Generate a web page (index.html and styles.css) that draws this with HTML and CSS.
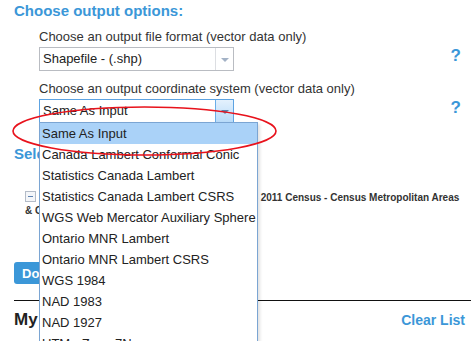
FILE: index.html
```html
<!DOCTYPE html>
<html lang="en">
<head>
    <meta charset="UTF-8">
    <title>Output options</title>
    <link rel="stylesheet" href="styles.css">
</head>
<body>

<div class="page">
    <h2 class="heading">Choose output options:</h2>

    <div class="field">
        <label class="field-label">Choose an output file format (vector data only)</label>
        <div class="field-row">
            <div class="select">
                <span class="select-value">Shapefile - (.shp)</span>
                <span class="select-arrow"></span>
            </div>
            <span class="help">?</span>
        </div>
    </div>

    <div class="field">
        <label class="field-label">Choose an output coordinate system (vector data only)</label>
        <div class="field-row">
            <div class="select open">
                <span class="select-value">Same As Input</span>
                <span class="select-arrow"></span>
                <ul class="options">
                    <li class="selected">Same As Input</li>
                    <li>Canada Lambert Conformal Conic</li>
                    <li>Statistics Canada Lambert</li>
                    <li>Statistics Canada Lambert CSRS</li>
                    <li>WGS Web Mercator Auxiliary Sphere</li>
                    <li>Ontario MNR Lambert</li>
                    <li>Ontario MNR Lambert CSRS</li>
                    <li>WGS 1984</li>
                    <li>NAD 1983</li>
                    <li>NAD 1927</li>
                    <li>UTM - Zone 7N</li>
                </ul>
            </div>
            <span class="help">?</span>
        </div>
    </div>

    <h2 class="heading section">Select layers to download:</h2>

    <div class="tree">
        <span class="toggle"></span>
        Statistics Canada - Census Boundaries (CB) - 2011 Census - Census Metropolitan Areas &amp; Census Agglomerations
    </div>

    <button class="download">Download</button>

    <div class="list-head">
        <span class="list-title">My Downloads</span>
        <a class="clear" href="#">Clear List</a>
    </div>

    <!-- red highlight drawn round the selected option -->
    <svg class="mark" width="471" height="341" viewBox="0 0 471 341">
        <ellipse cx="144.5" cy="131" rx="131.5" ry="24" fill="none" stroke="#e8121c" stroke-width="1.6"/>
    </svg>
</div>

</body>
</html>
```

FILE: styles.css
```css
body {
    margin: 0;
    font-family: Arial, "Liberation Sans", sans-serif;
    color: #333;
    background: #fff;
}

.page {
    position: relative;
    width: 471px;
    height: 341px;
    overflow: hidden;
    padding: 0 6px 0 14px;
    box-sizing: border-box;
}

.heading {
    margin: 0;
    font-size: 15px;
    line-height: 22px;
    font-weight: bold;
    color: #3b97d8;
}

.heading.section {
    margin-top: 20px;
    white-space: nowrap;
}

.field {
    padding-left: 25px;
    margin-top: 7px;
}

.field + .field {
    margin-top: 10px;
}

.field-label {
    display: block;
    font-size: 13px;
    line-height: 16px;
    color: #333;
    margin-bottom: 2px;
}

.field-row {
    display: flex;
    align-items: flex-start;
    justify-content: space-between;
}

.select {
    position: relative;
    display: flex;
    width: 195px;
    height: 24px;
    box-sizing: border-box;
    border: 1px solid #b9bcc2;
    background: #fff;
    font-size: 13px;
    color: #222;
}

.select-value {
    flex: 1;
    padding-left: 3px;
    line-height: 22px;
}

.select-arrow {
    position: relative;
    width: 17px;
    border-left: 1px solid #dcdee2;
    background: #fff;
}

.select-arrow::after {
    content: "";
    position: absolute;
    left: 5px;
    top: 10px;
    border-left: 4px solid transparent;
    border-right: 4px solid transparent;
    border-top: 4px solid #a3b2c6;
}

.select.open {
    border-color: #5da3e2;
}

.select.open .select-arrow {
    border-left-color: #6aaee8;
    background: linear-gradient(#e4f1fd, #b8dbf9);
}

.select.open .select-arrow::after {
    border-top-color: #5b7fa6;
}

.options {
    position: absolute;
    top: 22px;
    left: -1px;
    z-index: 5;
    width: 219px;
    margin: 0;
    padding: 0;
    list-style: none;
    box-sizing: border-box;
    border: 1px solid #7ba5d3;
    background: #fff;
    box-shadow: 2px 2px 3px rgba(0, 0, 0, 0.12);
}

.options li {
    height: 21px;
    line-height: 21px;
    padding-left: 2px;
    font-size: 13px;
    color: #222;
    white-space: nowrap;
}

.options li.selected {
    background: #aad2f8;
}

.help {
    font-size: 17px;
    line-height: 17px;
    font-weight: bold;
    color: #3b97d8;
    margin-right: 4px;
}

.tree {
    margin: 26px 0 0 11px;
    font-size: 10px;
    font-weight: bold;
    line-height: 13px;
    color: #333;
}

.toggle {
    position: relative;
    display: inline-block;
    width: 9px;
    height: 9px;
    margin-right: 3px;
    vertical-align: -1px;
    border: 1px solid #b4bcc8;
    background: #f4f6f9;
}

.toggle::after {
    content: "";
    position: absolute;
    left: 2px;
    top: 4px;
    width: 5px;
    height: 1px;
    background: #5d82b2;
}

.download {
    display: block;
    height: 22px;
    margin-top: 45px;
    padding: 0 8px;
    border: none;
    border-radius: 3px;
    background: #3b97d8;
    color: #fff;
    font-family: Arial, "Liberation Sans", sans-serif;
    font-size: 13px;
    font-weight: bold;
}

.list-head {
    display: flex;
    justify-content: space-between;
    align-items: center;
    margin-top: 16px;
    margin-right: -6px;
    padding: 9px 6px 0 0;
    border-top: 1px solid #111;
}

.list-title {
    font-size: 17px;
    line-height: 20px;
    font-weight: bold;
    color: #222;
}

.clear {
    font-size: 14px;
    font-weight: bold;
    color: #3b97d8;
    text-decoration: none;
}

.mark {
    position: absolute;
    top: 0;
    left: 0;
    z-index: 10;
    pointer-events: none;
}
```
